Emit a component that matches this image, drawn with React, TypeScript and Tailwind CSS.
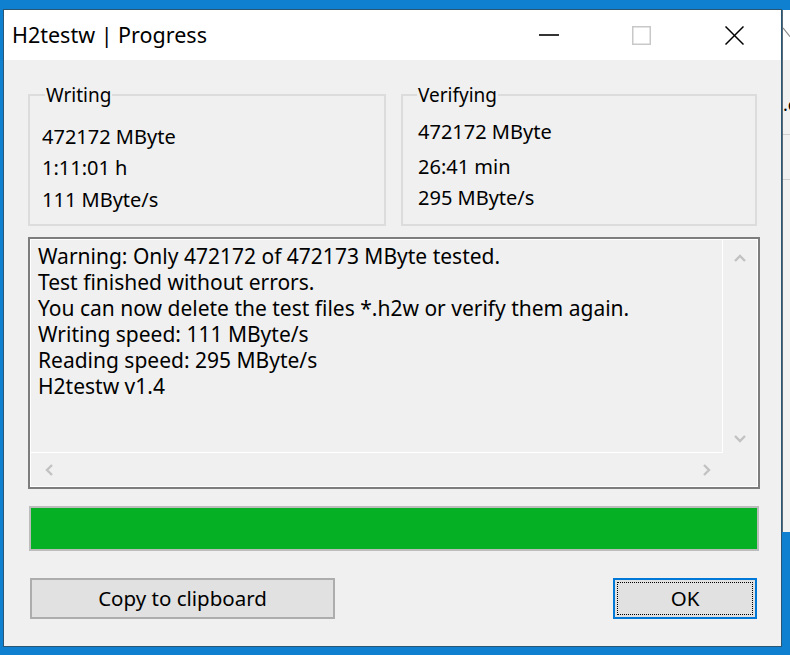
const font = "font-['Noto_Sans',sans-serif]";

function Chevron({ dir }: { dir: "up" | "down" | "left" | "right" }) {
  const pts = {
    up: "1,8 6,3 11,8",
    down: "1,3 6,8 11,3",
    left: "8,1 3,6 8,11",
    right: "3,1 8,6 3,11",
  }[dir];
  return (
    <svg width="12" height="12" viewBox="0 0 12 12">
      <polyline points={pts} fill="none" stroke="#c2c2c2" strokeWidth="2.4" />
    </svg>
  );
}

function Group({ title, lines, legendMl, padL, rows }: { title: string; lines: string[]; legendMl: string; padL: string; rows: string[] }) {
  return (
    <fieldset className="border-2 border-[#dcdcdc] h-[142px]">
      <legend className={`${legendMl} px-[1px] text-[19px] leading-[22px] text-black`}>{title}</legend>
      <div className={`${padL} text-[20px] text-black`}>
        {lines.map((l, i) => (
          <div key={l} className={rows[i]}>
            {l}
          </div>
        ))}
      </div>
    </fieldset>
  );
}

export default function App() {
  return (
    <div className={`w-[790px] h-[655px] overflow-hidden bg-[#0f7fd0] flex items-start pt-[9px] pl-[3px] ${font}`}>
      {/* Dialog window */}
      <div className="w-[779px] h-[638px] border border-[#2b5673] bg-[#f0f0f0] flex flex-col shrink-0">
        {/* Title bar */}
        <div className="h-[50px] bg-white flex items-center">
          <div className="pl-[8px] flex-1 text-[21.5px] text-black">H2testw | Progress</div>
          <div className="w-[93px] h-full flex items-center justify-center">
            <svg width="20" height="20" viewBox="0 0 20 20">
              <line x1="0" y1="10" x2="20" y2="10" stroke="#000" strokeWidth="1.6" />
            </svg>
          </div>
          <div className="w-[93px] h-full flex items-center justify-center">
            <svg width="19" height="19" viewBox="0 0 19 19">
              <rect x="0.75" y="0.75" width="17.5" height="17.5" fill="none" stroke="#c8c8c8" strokeWidth="1.5" />
            </svg>
          </div>
          <div className="w-[93px] h-full flex items-center justify-center">
            <svg width="19" height="19" viewBox="0 0 19 19">
              <line x1="0.5" y1="0.5" x2="18.5" y2="18.5" stroke="#000" strokeWidth="1.5" />
              <line x1="18.5" y1="0.5" x2="0.5" y2="18.5" stroke="#000" strokeWidth="1.5" />
            </svg>
          </div>
        </div>

        {/* Client area */}
        <div className="flex-1 flex flex-col pl-[24px] pr-[21px] pt-[24px]">
          <div className="grid grid-cols-[358px_356px] gap-x-[15px]">
            <Group
              title="Writing"
              legendMl="ml-[15px]"
              padL="pl-[12px]"
              lines={["472172 MByte", "1:11:01 h", "111 MByte/s"]}
              rows={["mt-[16px] leading-[30px]", "mt-[1px] leading-[30px]", "mt-[2px] leading-[30px]"]}
            />
            <Group
              title="Verifying"
              legendMl="ml-[14px]"
              padL="pl-[15px]"
              lines={["472172 MByte", "26:41 min", "295 MByte/s"]}
              rows={["mt-[11px] leading-[30px]", "mt-[5px] leading-[30px]", "mt-[1px] leading-[30px]"]}
            />
          </div>

          {/* Log box */}
          <div className="mt-[11px] h-[252px] border-2 border-[#7d7d7d]">
            <div className="h-full border border-white grid grid-cols-[1fr_34px] grid-rows-[1fr_33px]">
              <div className="border-r border-b border-white pl-[7px] pt-[3px] text-[21px] leading-[26px] text-black">
                <div>Warning: Only 472172 of 472173 MByte tested.</div>
                <div>Test finished without errors.</div>
                <div>You can now delete the test files *.h2w or verify them again.</div>
                <div>Writing speed: 111 MByte/s</div>
                <div>Reading speed: 295 MByte/s</div>
                <div>H2testw v1.4</div>
              </div>
              <div className="flex flex-col items-center justify-between pt-[13px] pb-[8px]">
                <Chevron dir="up" />
                <Chevron dir="down" />
              </div>
              <div className="flex items-center justify-between pl-[13px] pr-[10px]">
                <Chevron dir="left" />
                <Chevron dir="right" />
              </div>
              <div />
            </div>
          </div>

          {/* Progress bar */}
          <div className="mt-[17px] ml-[1px] mr-[1px] h-[45px] border-2 border-[#bcbcbc] bg-[#06b025]" />

          {/* Buttons */}
          <div className="mt-[27px] flex justify-between pl-[2px] pr-[3px]">
            <button className="w-[305px] h-[41px] bg-[#e1e1e1] border-2 border-[#adadad] text-[20.5px] text-black">
              Copy to clipboard
            </button>
            <button className="w-[144px] h-[41px] bg-[#e1e1e1] border-2 border-[#0078d7] p-[2px] text-[20.5px] text-black">
              <div className="h-full border border-dotted border-black flex items-center justify-center">OK</div>
            </button>
          </div>
        </div>
      </div>

      {/* Background window edge */}
      <div className="w-[8px] h-[522px] mt-[1px] shrink-0 bg-[#f0f0f0] flex flex-col overflow-hidden border-l border-[#5a6b78]">
        <div className="h-[50px] bg-white flex items-center">
          <svg width="8" height="14" viewBox="0 0 8 14" className="mt-[-2px]">
            <line x1="0" y1="0" x2="8" y2="10" stroke="#888" strokeWidth="1.3" />
          </svg>
        </div>
        <div className="mt-[34px] text-[18px] leading-[20px] text-black whitespace-nowrap">.c</div>
        <div className="mt-[20px] h-px bg-[#d0d0d0]" />
        <div className="mt-[44px] h-px bg-[#d0d0d0]" />
      </div>
    </div>
  );
}
